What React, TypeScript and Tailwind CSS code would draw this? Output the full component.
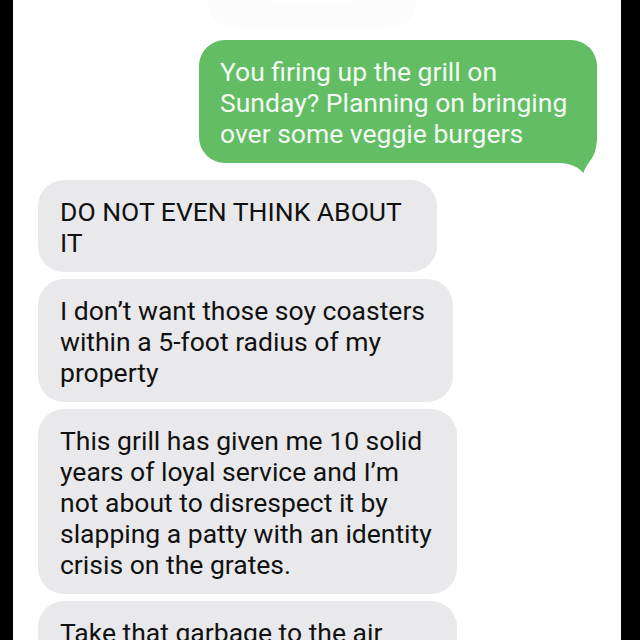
const font = { fontFamily: "Roboto, 'Liberation Sans', sans-serif" };

type Msg = { lines: string[]; width: string };

const incoming: Msg[] = [
  { lines: ["DO NOT EVEN THINK ABOUT", "IT"], width: "w-[399px]" },
  {
    lines: ["I don’t want those soy coasters", "within a 5-foot radius of my", "property"],
    width: "w-[415px]",
  },
  {
    lines: [
      "This grill has given me 10 solid",
      "years of loyal service and I’m",
      "not about to disrespect it by",
      "slapping a patty with an identity",
      "crisis on the grates.",
    ],
    width: "w-[419px]",
  },
  { lines: ["Take that garbage to the air"], width: "w-[419px]" },
];

function Tail() {
  // little hook on the bottom-right of the sent bubble
  return (
    <svg
      className="absolute right-[-4px] bottom-[-12px]"
      width="40"
      height="40"
      viewBox="0 0 40 40"
    >
      <path
        d="M0 0 L36 0 C36 14 33 21 29 26 C26 30 23.5 34 22.5 38 C18 33 12 29.5 4 28.5 L0 28 Z"
        fill="#62bd65"
      />
    </svg>
  );
}

export default function App() {
  return (
    <div className="flex h-[640px] w-full overflow-hidden bg-black" style={font}>
      <div className="ml-[13px] flex w-[608px] shrink-0 flex-col bg-white">
        {/* faded bubble peeking in at the top */}
        <div className="flex h-[40px] shrink-0 justify-center">
          <div className="ml-[-10px] h-[28px] w-[210px] rounded-b-[28px] bg-[#fcfcfc]">
            <div className="mx-auto h-[4px] w-[82px] rounded-b-full bg-white" />
          </div>
        </div>

        {/* sent */}
        <div className="flex shrink-0 justify-end pr-[24px]">
          <div className="relative w-[398px] rounded-[26px] bg-[#62bd65] pt-[16px] pb-[14px] pl-[21px] text-[26.5px] leading-[31px] text-[#f2faf2]">
            <span className="block whitespace-nowrap">You firing up the grill on</span>
            <span className="block whitespace-nowrap">Sunday? Planning on bringing</span>
            <span className="block whitespace-nowrap">over some veggie burgers</span>
            <Tail />
          </div>
        </div>

        {/* received */}
        <div className="mt-[17px] flex shrink-0 flex-col gap-[7px] pl-[25px]">
          {incoming.map((m, i) => (
            <div
              key={i}
              className={`${m.width} shrink-0 rounded-[26px] bg-[#e9e9eb] pt-[16px] pb-[14px] pl-[22px] text-[26.5px] leading-[31px] text-[#111111]`}
            >
              {m.lines.map((l, j) => (
                <span key={j} className="block whitespace-nowrap">
                  {l}
                </span>
              ))}
            </div>
          ))}
        </div>
      </div>
    </div>
  );
}
